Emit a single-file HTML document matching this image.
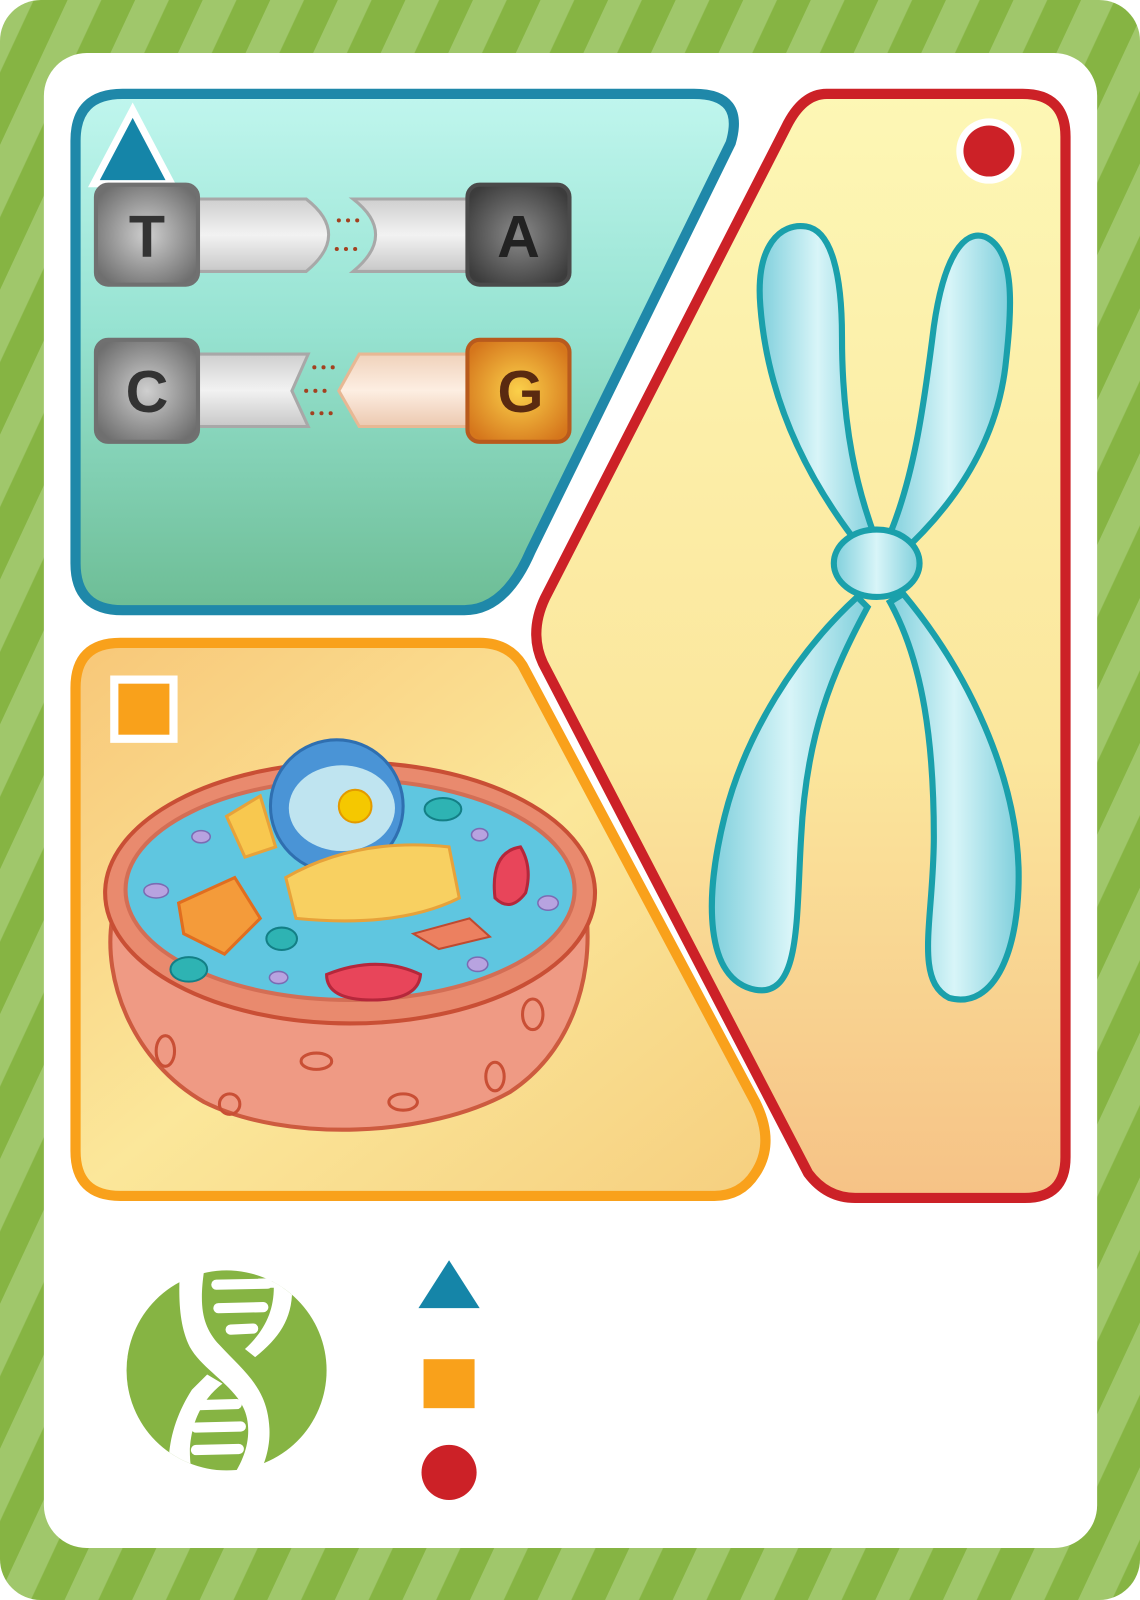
<!DOCTYPE html>
<html><head><meta charset="utf-8"><style>html,body{margin:0;padding:0;background:#fff}svg{display:block}</style></head><body>
<svg width="1140" height="1600" viewBox="0 0 1117 1568" preserveAspectRatio="none" xmlns="http://www.w3.org/2000/svg">
<defs>
<pattern id="st" width="60" height="60" patternUnits="userSpaceOnUse" patternTransform="rotate(25)">
<rect width="60" height="60" fill="#86b443"/><rect width="30" height="60" fill="#a0c76b"/></pattern>
<linearGradient id="gb" x1="0" y1="0" x2="0" y2="1"><stop offset="0" stop-color="#c0f6ee"/><stop offset="0.45" stop-color="#97e3d2"/><stop offset="1" stop-color="#6dbd95"/></linearGradient>
<linearGradient id="gr" x1="0" y1="0" x2="0" y2="1"><stop offset="0" stop-color="#fdf7b5"/><stop offset="0.6" stop-color="#fbe69c"/><stop offset="1" stop-color="#f6c286"/></linearGradient>
<linearGradient id="go" x1="0" y1="0" x2="1" y2="1"><stop offset="0" stop-color="#f8c778"/><stop offset="0.5" stop-color="#fbe79a"/><stop offset="1" stop-color="#f6cf7f"/></linearGradient>
<radialGradient id="tg" cx="0.5" cy="0.5" r="0.6"><stop offset="0" stop-color="#cfcfcf"/><stop offset="1" stop-color="#6f6f6f"/></radialGradient>
<radialGradient id="tgd" cx="0.5" cy="0.5" r="0.6"><stop offset="0" stop-color="#8a8a8a"/><stop offset="1" stop-color="#3c3c3c"/></radialGradient>
<radialGradient id="tgo" cx="0.5" cy="0.5" r="0.6"><stop offset="0" stop-color="#fbd04a"/><stop offset="1" stop-color="#d5761c"/></radialGradient>
<linearGradient id="bar" x1="0" y1="0" x2="0" y2="1"><stop offset="0" stop-color="#cfcfcf"/><stop offset="0.5" stop-color="#f2f2f2"/><stop offset="1" stop-color="#c8c8c8"/></linearGradient>
<linearGradient id="barp" x1="0" y1="0" x2="0" y2="1"><stop offset="0" stop-color="#f0d2bb"/><stop offset="0.5" stop-color="#fdeee2"/><stop offset="1" stop-color="#ecc9b0"/></linearGradient>
<linearGradient id="chr" x1="0" y1="0" x2="1" y2="0"><stop offset="0" stop-color="#7fcfdc"/><stop offset="0.5" stop-color="#d8f5f8"/><stop offset="1" stop-color="#7fcfdc"/></linearGradient>
<clipPath id="cc"><circle cx="222" cy="1343" r="98"/></clipPath>
</defs>
<rect width="1117" height="1568" rx="40" fill="url(#st)"/>
<rect x="43" y="52" width="1032" height="1465" rx="42" fill="#fff"/>

<path d="M120 92 H680 Q730 92 716 140 L520 540 Q495 598 455 598 H120 Q74 598 74 552 V138 Q74 92 120 92 Z" fill="url(#gb)" stroke="#1f88a9" stroke-width="10"/>
<path d="M130 108 L92 180 H168 Z" fill="#1585a8" stroke="#fff" stroke-width="7"/>

<path d="M190 195 H300 Q322 212 322 230 Q322 248 300 266 H190 Z" fill="url(#bar)" stroke="#a8a8a8" stroke-width="3"/>
<path d="M346 195 H465 V266 H346 Q368 248 368 230 Q368 212 346 195 Z" fill="url(#bar)" stroke="#a8a8a8" stroke-width="3"/>
<g fill="#a3401f"><circle cx="332" cy="216" r="2"/><circle cx="341" cy="216" r="2"/><circle cx="350" cy="216" r="2"/><circle cx="330" cy="244" r="2"/><circle cx="339" cy="244" r="2"/><circle cx="348" cy="244" r="2"/>
<circle cx="308" cy="360" r="2"/><circle cx="317" cy="360" r="2"/><circle cx="326" cy="360" r="2"/><circle cx="300" cy="383" r="2"/><circle cx="309" cy="383" r="2"/><circle cx="318" cy="383" r="2"/><circle cx="306" cy="405" r="2"/><circle cx="315" cy="405" r="2"/><circle cx="324" cy="405" r="2"/></g>
<path d="M190 347 H302 L286 383 L302 418 H190 Z" fill="url(#bar)" stroke="#a8a8a8" stroke-width="3"/>
<path d="M352 347 H465 V418 H352 L332 383 Z" fill="url(#barp)" stroke="#e7b894" stroke-width="3"/>
<rect x="94" y="181" width="100" height="98" rx="12" fill="url(#tg)" stroke="#707070" stroke-width="4"/>
<rect x="458" y="181" width="100" height="98" rx="12" fill="url(#tgd)" stroke="#4a4a4a" stroke-width="4"/>
<rect x="94" y="333" width="100" height="100" rx="12" fill="url(#tg)" stroke="#707070" stroke-width="4"/>
<rect x="458" y="333" width="100" height="100" rx="12" fill="url(#tgo)" stroke="#b85a1d" stroke-width="4"/>
<g font-family="Liberation Sans, sans-serif" font-weight="bold" font-size="58" text-anchor="middle">
<text x="144" y="252" fill="#333">T</text><text x="508" y="252" fill="#222">A</text>
<text x="144" y="404" fill="#333">C</text><text x="510" y="404" fill="#5a2a10">G</text></g>

<path d="M810 92 H1002 Q1044 92 1044 134 V1134 Q1044 1174 1004 1174 H838 Q810 1174 792 1150 L532 650 Q518 620 534 586 L770 125 Q786 92 810 92 Z" fill="url(#gr)" stroke="#cc2127" stroke-width="10"/>
<circle cx="969" cy="148" r="32" fill="#fff"/><circle cx="969" cy="148" r="25" fill="#cc2127"/>

<g stroke="#1aa0ab" stroke-width="6" fill="url(#chr)">
<path d="M846 540 C790 470 752 390 745 300 C740 240 765 218 790 222 C815 226 825 270 825 330 C825 420 840 480 858 528 Z"/>
<path d="M870 528 C895 470 905 400 915 320 C925 250 945 225 965 232 C995 245 992 300 985 360 C975 440 930 500 880 545 Z"/>
<path d="M840 585 C780 640 730 720 710 800 C690 880 690 960 740 970 C785 978 780 900 785 820 C790 720 815 660 850 595 Z"/>
<path d="M872 590 C905 650 915 730 915 820 C915 900 895 960 930 978 C975 990 1000 930 998 850 C995 760 950 660 885 582 Z"/>
<ellipse cx="859" cy="552" rx="42" ry="33"/>
</g>

<path d="M118 630 H470 Q498 630 512 652 L740 1080 Q760 1120 740 1150 Q726 1172 700 1172 H118 Q74 1172 74 1128 V674 Q74 630 118 630 Z" fill="url(#go)" stroke="#f9a11b" stroke-width="10"/>
<rect x="108" y="662" width="66" height="66" fill="#fff"/><rect x="116" y="670" width="50" height="50" fill="#f9a11b"/>

<path d="M110 900 C100 960 130 1040 200 1080 C280 1120 420 1115 500 1070 C560 1030 580 960 575 900 Z" fill="#ef9a84" stroke="#cd5b3f" stroke-width="4"/>
<ellipse cx="343" cy="875" rx="240" ry="128" fill="#e98a6e" stroke="#c94f35" stroke-width="4"/>
<ellipse cx="343" cy="872" rx="220" ry="108" fill="#5fc6e0" stroke="#d36e55" stroke-width="4"/>
<g fill="none" stroke="#c94f35" stroke-width="3">
<ellipse cx="162" cy="1030" rx="9" ry="15"/><ellipse cx="225" cy="1082" rx="10" ry="10"/><ellipse cx="310" cy="1040" rx="15" ry="8"/><ellipse cx="395" cy="1080" rx="14" ry="8"/><ellipse cx="485" cy="1055" rx="9" ry="14"/><ellipse cx="522" cy="994" rx="10" ry="15"/></g>
<circle cx="330" cy="790" r="65" fill="#4a94d6" stroke="#2f6fb0" stroke-width="3"/>
<ellipse cx="335" cy="792" rx="52" ry="42" fill="#bfe4f0"/>
<circle cx="348" cy="790" r="16" fill="#f5c800" stroke="#e39a00" stroke-width="2"/>
<path d="M280 860 Q350 820 440 830 L450 880 Q390 910 290 900 Z" fill="#f8d061" stroke="#e7a23a" stroke-width="3"/>
<path d="M175 885 L230 860 L255 900 L220 935 L180 915 Z" fill="#f49b3a" stroke="#e06e20" stroke-width="3"/>
<path d="M222 800 L255 780 L270 830 L240 840 Z" fill="#f8c84f" stroke="#e7a23a" stroke-width="3"/>
<path d="M320 955 Q370 935 412 955 Q410 980 365 980 Q320 980 320 955 Z" fill="#e8455a" stroke="#b5273b" stroke-width="3"/>
<path d="M485 880 Q480 835 510 830 Q522 850 515 875 Q500 895 485 880 Z" fill="#e8455a" stroke="#b5273b" stroke-width="3"/>
<path d="M405 915 L460 900 L480 918 L430 930 Z" fill="#ec8060" stroke="#c04a30" stroke-width="2"/>
<g fill="#2eb3b3" stroke="#137f86" stroke-width="2"><ellipse cx="434" cy="793" rx="18" ry="11"/><ellipse cx="276" cy="920" rx="15" ry="11"/><ellipse cx="185" cy="950" rx="18" ry="12"/></g>
<g fill="#b8a3e0" stroke="#7b6bb3" stroke-width="1.5"><ellipse cx="153" cy="873" rx="12" ry="7"/><ellipse cx="197" cy="820" rx="9" ry="6"/><ellipse cx="470" cy="818" rx="8" ry="6"/><ellipse cx="537" cy="885" rx="10" ry="7"/><ellipse cx="468" cy="945" rx="10" ry="7"/><ellipse cx="273" cy="958" rx="9" ry="6"/></g>

<!-- DNA logo -->
<circle cx="222" cy="1343" r="98" fill="#86b443"/>
<path d="M172 1250 L188 1245 L200 1245 C195 1280 198 1300 215 1318 C240 1345 262 1360 264 1400 C265 1420 258 1440 250 1450 L226 1450 C240 1430 246 1410 242 1390 C236 1360 200 1345 186 1320 C176 1300 175 1275 176 1250 Z" fill="#fff"/>
<path d="M272 1253 L286 1258 C288 1290 275 1310 250 1330 L240 1322 C262 1302 270 1280 268 1254 Z" fill="#fff" clip-path="url(#cc)"/>
<path d="M203 1347 L218 1356 C200 1370 188 1390 186 1420 C186 1432 187 1442 190 1450 L166 1446 C163 1420 170 1390 188 1362 Z" fill="#fff" clip-path="url(#cc)"/>
<path d="M253 1253 L282 1252 L280 1262 L253 1262 Z" fill="#fff" clip-path="url(#cc)"/>
<g stroke="#fff" stroke-width="10" stroke-linecap="round">
<line x1="212" y1="1259" x2="262" y2="1258"/><line x1="214" y1="1282" x2="258" y2="1281"/><line x1="226" y1="1303" x2="248" y2="1302"/>
<line x1="194" y1="1377" x2="232" y2="1376"/><line x1="192" y1="1399" x2="236" y2="1398"/><line x1="192" y1="1421" x2="234" y2="1420"/></g>

<path d="M440 1235 L470 1282 H410 Z" fill="#1585a8"/>
<rect x="415" y="1332" width="50" height="48" fill="#f9a11b"/>
<circle cx="440" cy="1443" r="27" fill="#cc2127"/>
</svg>
</body></html>
